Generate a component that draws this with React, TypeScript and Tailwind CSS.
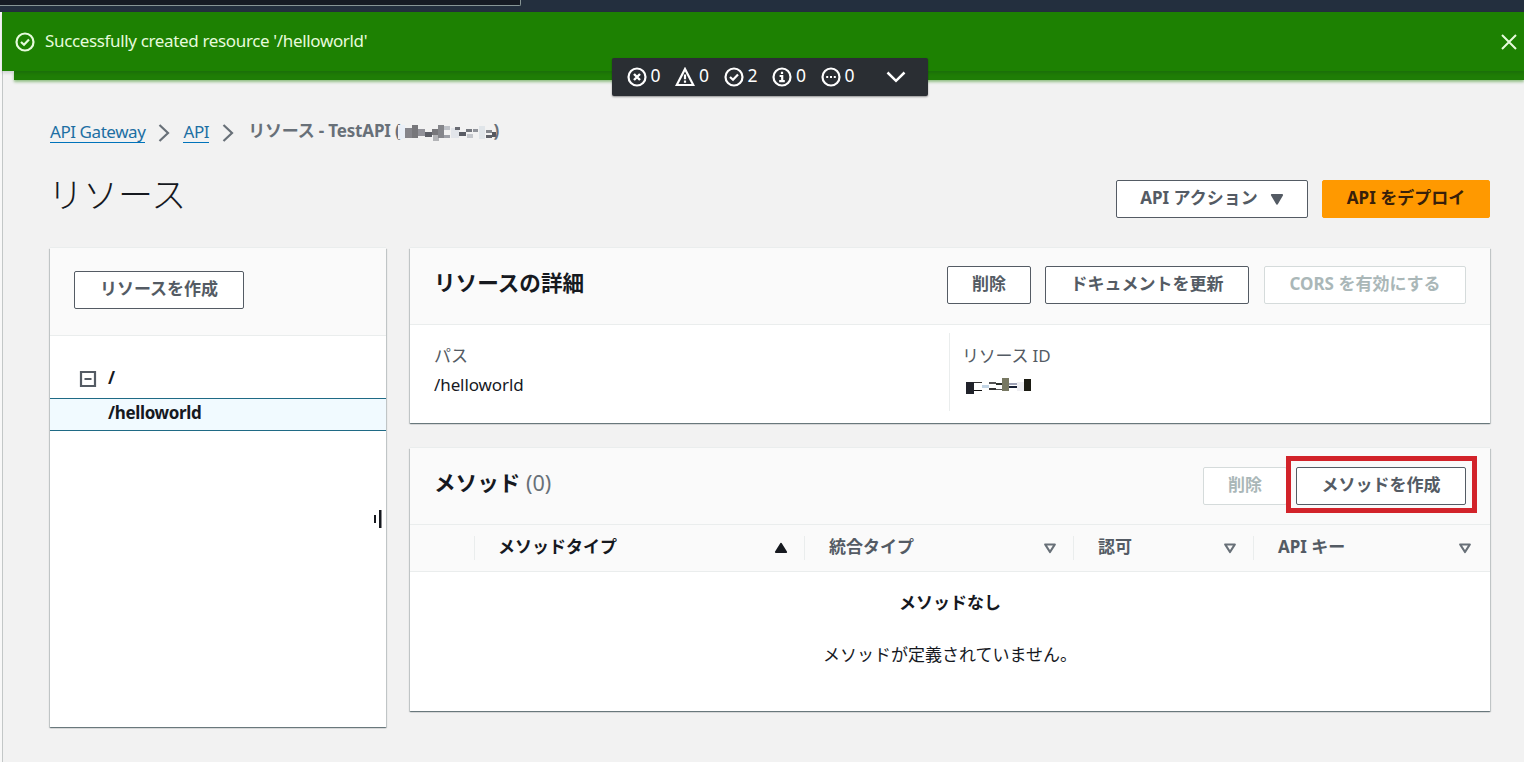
import type { ReactNode } from 'react';

function StatusIcon({ kind }: { kind: 'error' | 'warning' | 'success' | 'info' | 'progress' }) {
  return (
    <svg viewBox="0 0 20 20" className="h-5 w-5 shrink-0" fill="none" stroke="currentColor" strokeWidth="2.2">
      {kind === 'warning' ? (
        <>
          <path d="M10 2 L18.3 18 H1.7 Z" />
          <path d="M10 7.5 V12.2 M10 13.6 V15.8" />
        </>
      ) : (
        <circle cx="10" cy="10" r="8.5" />
      )}
      {kind === 'error' && <path d="M7 7 L13 13 M13 7 L7 13" strokeWidth="2.4" />}
      {kind === 'success' && <path d="M6 10 L9 12.8 L14 7.4" />}
      {kind === 'info' && <path d="M10 4.8 V7 M7.6 9 H10.2 V14 M7.2 14.2 H12.8" />}
      {kind === 'progress' && <path d="M5.2 10 H7.2 M9 10 H11 M12.8 10 H14.8" />}
    </svg>
  );
}

function Chevron() {
  return (
    <svg viewBox="0 0 12 18" className="h-[18px] w-3 shrink-0" fill="none" stroke="#687078" strokeWidth="2.2">
      <path d="M1.5 1 L10 9 L1.5 17" />
    </svg>
  );
}

function Button({ className, children }: { className: string; children: ReactNode }) {
  return (
    <button
      className={`flex h-[38px] shrink-0 items-center justify-center whitespace-nowrap rounded-[2px] border pb-[3px] text-[17px] font-bold ${className}`}
    >
      {children}
    </button>
  );
}

type Block = [number, number, number, number, string];

const idBlocks: Block[] = [
  [0, 0, 7, 14, '#e9eff7'], [7, 3, 7, 10, '#85858b'], [14, 0, 6, 13, '#77777b'],
  [20, 4, 7, 7, '#929299'], [27, 7, 7, 5, '#5d5f66'], [34, 4, 6, 6, '#77777b'],
  [35, 10, 6, 6, '#b3b4b7'], [40, 0, 6, 13, '#85868b'], [46, 1, 6, 4, '#c0c3c9'],
  [46, 10, 6, 3, '#9fa1a8'], [53, 3, 8, 10, '#e2e5ea'], [57, 2, 5, 3, '#696b73'],
  [61, 7, 7, 4, '#595c64'], [68, 4, 6, 3, '#74777e'], [69, 9, 6, 4, '#c4c7cc'],
  [75, 4, 5, 3, '#8f9299'], [81, 1, 6, 13, '#e0e5e9'], [88, 5, 6, 3, '#85888e'],
  [88, 10, 6, 3, '#5e6168'], [94, 7, 6, 5, '#55585e'],
];

const resourceBlocks: Block[] = [
  [0, 4, 7, 12, '#20222a'], [7, 4, 7, 1, '#333333'], [7, 12, 7, 1, '#111111'],
  [14, 7, 6, 3, '#c2d4e4'], [20, 4, 6, 2, '#555555'], [20, 10, 6, 2, '#333333'],
  [26, 5, 6, 2, '#2b302b'], [26, 11, 6, 1, '#555555'], [32, 0, 6, 13, '#777862'],
  [38, 5, 7, 2, '#9da1b5'], [38, 8, 7, 2, '#172033'], [45, 4, 6, 9, '#eeeef2'],
  [51, 1, 6, 12, '#1b1b13'],
];

function Blocks({ data, className, viewBox }: { data: Block[]; className: string; viewBox?: string }) {
  return (
    <svg className={className} viewBox={viewBox} preserveAspectRatio="none" shapeRendering="crispEdges">
      {data.map(([x, y, w, h, fill], i) => (
        <rect key={i} x={x} y={y} width={w} height={h} fill={fill} />
      ))}
    </svg>
  );
}

function SortIcon({ kind }: { kind: 'up' | 'down' | 'filled' }) {
  return (
    <svg viewBox="0 0 14 12" className="h-3 w-3.5 shrink-0" strokeWidth="2.2" strokeLinejoin="round">
      {kind === 'up' && <path d="M7 2 L12 10 H2 Z" fill="#16191f" stroke="#16191f" />}
      {kind === 'down' && <path d="M2.2 2.5 H11.8 L7 10 Z" fill="none" stroke="#687078" />}
      {kind === 'filled' && <path d="M2 2 H12 L7 10.5 Z" fill="#545b64" stroke="#545b64" />}
    </svg>
  );
}

function HeaderCell({ label, className, active }: { label: string; className: string; active?: boolean }) {
  return (
    <div className={`flex h-6 items-center justify-between pl-6 ${className}`}>
      <span className={`relative -top-px whitespace-nowrap text-[17px] font-bold ${active ? 'text-[#16191f]' : 'text-[#545b64]'}`}>
        {label}
      </span>
      <SortIcon kind={active ? 'up' : 'down'} />
    </div>
  );
}

const card = 'bg-white shadow-[0_1px_1px_0_#001c2466,1px_1px_1px_0_#001c2426,-1px_1px_1px_0_#001c2426,0_-1px_0_0_#eaeded]';

const counts: ['error' | 'warning' | 'success' | 'info' | 'progress', number][] = [
  ['error', 0], ['warning', 0], ['success', 2], ['info', 0], ['progress', 0],
];

export default function App() {
  return (
    <div className="relative flex h-[762px] w-[1524px] flex-col overflow-hidden bg-[#f2f2f2] font-['Noto_Sans','Noto_Sans_CJK_JP',sans-serif] text-[#16191f]">
      <header className="h-3 shrink-0 bg-[#232f3e]">
        <div className="h-1.5 w-[521px] rounded-br-[2px] border-r border-b border-[#879596] bg-[#161b24]" />
      </header>

      <div className="flex min-h-0 flex-1">
        <div className="w-[3px] shrink-0 border-r border-[#c3c7c7] bg-[#f8f8f8]" />
        <main className="flex min-w-0 flex-1 flex-col">
          <div className="z-10 -ml-px flex h-[59px] shrink-0 items-center bg-[#1d8102] pr-1.5 pl-[13px] text-[#e6fbdc] shadow-[0_2px_3px_rgba(0,28,36,0.15)]">
            <StatusIcon kind="success" />
            <span className="relative -top-px ml-2.5 whitespace-nowrap text-[17px] tracking-[-0.35px]">
              Successfully created resource '/helloworld'
            </span>
            <svg viewBox="0 0 18 18" className="ml-auto h-[18px] w-[18px]" fill="none" stroke="currentColor" strokeWidth="2">
              <path d="M2 2 L16 16 M16 2 L2 16" />
            </svg>
          </div>
          <div className="ml-[11px] h-[9px] shrink-0 bg-[#1f7d06] shadow-[0_2px_3px_rgba(29,129,2,0.45)]" />

          <nav className="mt-[38px] ml-[47px] flex h-[26px] shrink-0 items-center whitespace-nowrap text-[17px]">
            <a className="h-6 border-b border-[#0073bb] leading-[25px] tracking-[-0.43px] text-[#1d6fa3]">API Gateway</a>
            <span className="mr-[13px] ml-[13px] flex pt-[3px]"><Chevron /></span>
            <a className="h-6 border-b border-[#0073bb] leading-[25px] tracking-[-0.4px] text-[#1d6fa3]">API</a>
            <span className="mr-[14px] ml-[13px] flex pt-[3px]"><Chevron /></span>
            <span className="flex items-center font-bold text-[#687078]">
              <span className="tracking-[-0.18px]">リソース - TestAPI (</span>
              <Blocks data={idBlocks} className="mt-[3px] -ml-[3px] h-4 w-[98px]" />
              <span className="-ml-0.5">)</span>
            </span>
          </nav>

          <div className="mt-9 mr-[34px] ml-[47px] flex h-[38px] shrink-0 items-center">
            <h1 className="relative -top-1 -left-0.5 flex-1 text-[35px] leading-[38px] font-light">リソース</h1>
            <Button className="w-[192px] border-[#545b64] bg-white text-[#545b64]">
              API アクション
              <span className="ml-3 pt-0.5"><SortIcon kind="filled" /></span>
            </Button>
            <Button className="ml-3.5 w-[168px] border-[#ff9900] bg-[#ff9900] text-[#38200a]">API をデプロイ</Button>
          </div>

          <div className="mt-[30px] mr-[34px] ml-[47px] flex items-start gap-6">
            <aside className={`flex h-[479px] w-[336px] shrink-0 flex-col ${card}`}>
              <div className="h-[88px] shrink-0 border-b border-[#eaeded] bg-[#fafafa] pt-[23px] pl-6">
                <Button className="w-[170px] border-[#545b64] bg-white text-[#545b64]">リソースを作成</Button>
              </div>
              <div className="mt-[26px] mb-1 flex h-8 shrink-0 items-center pl-[29px] text-[17px] font-bold">
                <svg viewBox="0 0 18 18" className="mt-px h-[18px] w-[18px]" fill="none" stroke="#545b64" strokeWidth="2.2">
                  <path d="M2 2 H16 V16 H2 Z M5.5 9 H12.5" />
                </svg>
                <span className="ml-[11px]">/</span>
              </div>
              <div className="flex h-[33px] shrink-0 items-center border-y border-[#1f6a85] bg-[#f1faff] pb-[3px] pl-[58px] text-[17px] font-bold tracking-[-0.35px]">
                /helloworld
              </div>
              <svg viewBox="0 0 9 18" className="mt-[79px] ml-[323px] h-[18px] w-[9px] shrink-0" fill="#16191f">
                <rect x="1" y="5" width="2" height="8" />
                <rect x="6" y="0" width="2.5" height="18" />
              </svg>
            </aside>

            <div className="flex min-w-0 flex-1 flex-col gap-[25px]">
              <section className={`h-[175px] ${card}`}>
                <div className="flex h-[77px] items-center border-b border-[#eaeded] bg-[#fafafa] pr-6 pb-0.5 pl-6">
                  <h2 className="relative -top-0.5 flex-1 text-[21.6px] font-bold">リソースの詳細</h2>
                  <Button className="w-[84px] border-[#545b64] bg-white text-[#545b64]">削除</Button>
                  <Button className="ml-3.5 w-[204px] border-[#545b64] bg-white text-[#545b64]">ドキュメントを更新</Button>
                  <Button className="ml-[15px] w-[202px] border-[#d5dbdb] bg-white text-[#aab7b8]">CORS を有効にする</Button>
                </div>
                <div className="flex pt-2">
                  <div className="h-[78px] w-[540px] border-r border-[#eaeded] pt-2.5 pl-6 text-[17px]">
                    <div className="h-[28px] leading-[26px] text-[#545b64]">パス</div>
                    <div className="leading-[28px] tracking-[-0.1px]">/helloworld</div>
                  </div>
                  <div className="pt-2.5 pl-3 text-[17px]">
                    <div className="h-[28px] leading-[26px] tracking-[-0.2px] text-[#545b64]">リソース ID</div>
                    <Blocks data={resourceBlocks} viewBox="0 0 57 16" className="mt-[7px] ml-1 h-4 w-[65px]" />
                  </div>
                </div>
              </section>

              <section className={`h-[263px] ${card}`}>
                <div className="flex h-[77px] items-center border-b border-[#eaeded] bg-[#fafafa] pr-[13px] pl-6">
                  <h2 className="relative -top-[3px] flex-1 text-[21.6px] font-bold">
                    メソッド <span className="font-normal text-[#687078]">(0)</span>
                  </h2>
                  <Button className="w-[84px] border-[#d5dbdb] bg-white text-[#aab7b8]">削除</Button>
                  <div className="z-10 -mt-[3px] -ml-px flex h-[57px] w-[191px] items-center justify-center border-[5px] border-[#d2232a] bg-[#fafafa] pt-[3px] pr-px">
                    <Button className="w-[170px] border-[#545b64] bg-white text-[#545b64]">メソッドを作成</Button>
                  </div>
                </div>
                <div className="flex h-[47px] items-center border-b border-[#eaeded] bg-[#fafafa]">
                  <div className="h-6 w-[65px] border-r border-[#eaeded]" />
                  <HeaderCell active label="メソッドタイプ" className="w-[330px] border-r border-[#eaeded] pr-4 pl-[23px]" />
                  <HeaderCell label="統合タイプ" className="w-[269px] border-r border-[#eaeded] pr-4" />
                  <HeaderCell label="認可" className="w-[180px] border-r border-[#eaeded] pr-4" />
                  <HeaderCell label="API キー" className="flex-1 pr-[18px]" />
                </div>
                <div className="pt-[19px] text-center text-[17px] leading-6">
                  <p className="font-bold">メソッドなし</p>
                  <p className="mt-7">メソッドが定義されていません。</p>
                </div>
              </section>
            </div>
          </div>
        </main>
      </div>

      <div className="absolute top-[58px] left-[612px] z-20 flex h-[38px] w-[316px] items-center rounded-[2px] bg-[#2a2e33] pl-[14.5px] text-white shadow-[0_1px_2px_rgba(0,0,0,0.4)]">
        {counts.map(([kind, n]) => (
          <span key={kind} className="flex w-[48.5px] items-center gap-1">
            <StatusIcon kind={kind} />
            <span className="relative -top-0.5 text-[17.5px]">{n}</span>
          </span>
        ))}
        <svg viewBox="0 0 20 12" className="-mt-px ml-[17px] h-3 w-5" fill="none" stroke="currentColor" strokeWidth="2.5">
          <path d="M1.5 1.5 L10 9.8 L18.5 1.5" />
        </svg>
      </div>
    </div>
  );
}
